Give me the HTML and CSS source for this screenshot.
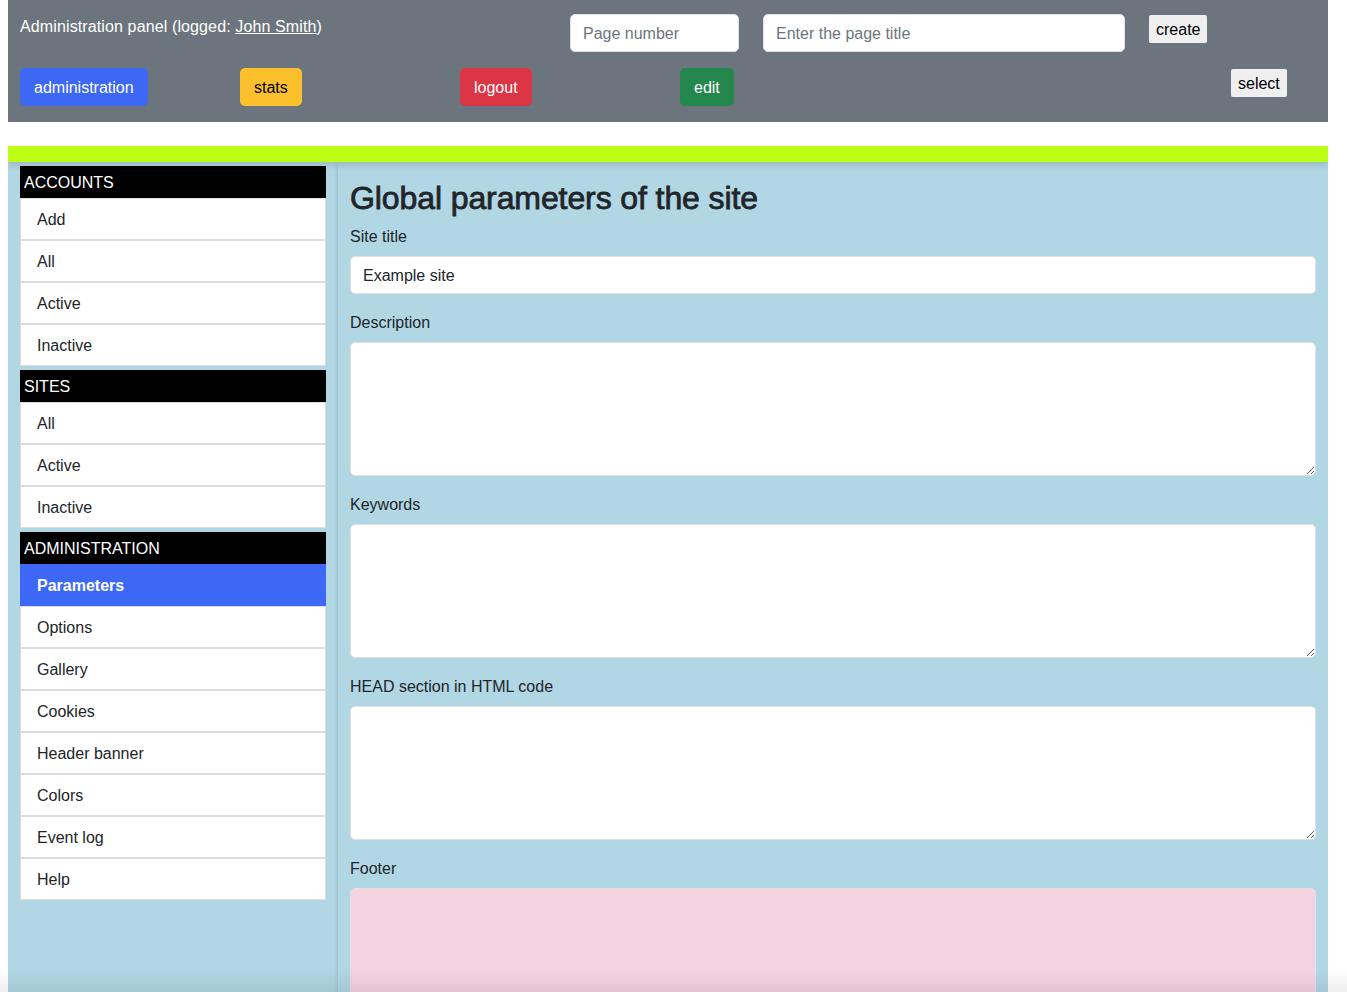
FILE: index.html
```html
<!DOCTYPE html>
<html lang="en">
<head>
<meta charset="utf-8">
<title>Administration panel</title>
<link rel="stylesheet" href="styles.css">
</head>
<body>
<header class="topbar">
  <div class="row-one">
    <div class="logged">Administration panel (logged: <a href="#">John Smith</a>)</div>
    <div class="field-cell"><input class="ctl" type="text" placeholder="Page number"></div>
    <div class="field-cell"><input class="ctl" type="text" placeholder="Enter the page title"></div>
    <div><button class="plain-btn">create</button></div>
  </div>
  <div class="row-two">
    <div><button class="btn btn-blue">administration</button></div>
    <div><button class="btn btn-yellow">stats</button></div>
    <div><button class="btn btn-red">logout</button></div>
    <div><button class="btn btn-green">edit</button></div>
    <div></div>
    <div><button class="plain-btn">select</button></div>
  </div>
</header>

<div class="lime-bar"></div>

<main class="main">
  <aside class="sidebar">
    <div class="group">
      <div class="group-head">ACCOUNTS</div>
      <a class="item" href="#">Add</a>
      <a class="item" href="#">All</a>
      <a class="item" href="#">Active</a>
      <a class="item" href="#">Inactive</a>
    </div>
    <div class="group">
      <div class="group-head">SITES</div>
      <a class="item" href="#">All</a>
      <a class="item" href="#">Active</a>
      <a class="item" href="#">Inactive</a>
    </div>
    <div class="group">
      <div class="group-head">ADMINISTRATION</div>
      <a class="item active" href="#">Parameters</a>
      <a class="item" href="#">Options</a>
      <a class="item" href="#">Gallery</a>
      <a class="item" href="#">Cookies</a>
      <a class="item" href="#">Header banner</a>
      <a class="item" href="#">Colors</a>
      <a class="item" href="#">Event log</a>
      <a class="item" href="#">Help</a>
    </div>
  </aside>

  <section class="content">
    <h2 class="title">Global parameters of the site</h2>
    <label class="lbl">Site title</label>
    <input class="ctl wide" type="text" value="Example site">
    <label class="lbl">Description</label>
    <textarea class="ctl area"></textarea>
    <label class="lbl">Keywords</label>
    <textarea class="ctl area"></textarea>
    <label class="lbl">HEAD section in HTML code</label>
    <textarea class="ctl area"></textarea>
    <label class="lbl">Footer</label>
    <textarea class="ctl area pink"></textarea>
  </section>
</main>

<div class="bottom-shade"></div>
</body>
</html>
```
FILE: styles.css
```css
* { box-sizing: border-box; }

html, body {
  margin: 0;
  padding: 0;
}

body {
  margin: 0 8px;
  font-family: "Liberation Sans", Arial, sans-serif;
  font-size: 16px;
  line-height: 24px;
  color: #212529;
  background: #fff;
  width: 1320px;
}

/* ---------- top bar ---------- */
.topbar {
  background: #6c757d;
  padding: 14px 12px 16px;
  display: flex;
  flex-direction: column;
  gap: 16px;
}

.row-one {
  display: grid;
  grid-template-columns: 550px 193px 386px auto;
  height: 38px;
}

.logged {
  color: #fff;
  line-height: 24px;
  padding-top: 1px;
  letter-spacing: 0.12px;
}

.logged a {
  color: #fff;
  text-decoration: underline;
}

.field-cell {
  padding-right: 24px;
}

.ctl {
  display: block;
  width: 100%;
  height: 38px;
  padding: 7px 12px 5px;
  font-family: inherit;
  font-size: 16px;
  line-height: 24px;
  color: #212529;
  background: #fff;
  border: 1px solid #dee2e6;
  border-radius: 5px;
  outline: none;
}

.ctl::placeholder {
  color: #6c757d;
}

.plain-btn {
  margin-top: 1px;
  height: 28px;
  padding: 1px 7px 0;
  font-family: inherit;
  font-size: 16px;
  line-height: 27px;
  color: #000;
  background: #efefef;
  border: none;
  border-radius: 2px;
}

.row-two {
  display: grid;
  grid-template-columns: 220px 220px 220px 220px 331px auto;
  height: 38px;
}

.btn {
  height: 38px;
  padding: 7px 13px 5px;
  font-family: inherit;
  font-size: 16px;
  line-height: 24px;
  border: 1px solid transparent;
  border-radius: 5px;
}

.btn-blue { background: #3d68f5; color: #fff; }
.btn-yellow { background: #fbc02c; color: #000; }
.btn-red { background: #dc3545; color: #fff; }
.btn-green { background: #24874e; color: #fff; }

/* ---------- lime bar ---------- */
.lime-bar {
  margin-top: 24px;
  height: 16px;
  background: #bdff14;
  position: relative;
  z-index: 2;
  box-shadow: 0 4px 6px rgba(0, 0, 0, 0.12);
}

/* ---------- main ---------- */
.main {
  display: grid;
  grid-template-columns: 330px 990px;
  background: #b1d6e4;
  box-shadow: 0 0 14px rgba(0, 0, 0, 0.10);
  position: relative;
  z-index: 1;
}

.sidebar {
  padding: 4px 12px 0;
  display: flex;
  flex-direction: column;
  gap: 4px;
}

.group {
  display: flex;
  flex-direction: column;
}

.group-head {
  background: #000;
  color: #fff;
  padding: 5px 4px 3px;
  line-height: 24px;
}

.item {
  display: block;
  height: 42px;
  padding: 9px 16px 7px;
  line-height: 24px;
  color: #212529;
  text-decoration: none;
  background: #fff;
  border: 1px solid #dcdcdc;
}

.item.active {
  background: #3d68f5;
  border-color: #3d68f5;
  color: #fff;
  font-weight: bold;
}

.content {
  padding: 16px 12px;
  box-shadow: -3px 0 4px -2px rgba(0, 0, 0, 0.12);
}

.title {
  margin: 0 0 8px;
  padding-top: 1px;
  height: 38px;
  font-size: 32px;
  line-height: 38px;
  font-weight: 400;
  letter-spacing: -0.1px;
  -webkit-text-stroke: 0.8px #212529;
  color: #212529;
}

.lbl {
  display: block;
  height: 24px;
  margin-bottom: 8px;
  padding-top: 1px;
  line-height: 24px;
}

.wide {
  margin-bottom: 16px;
}

.area {
  height: 134px;
  margin-bottom: 16px;
  resize: vertical;
}

.pink {
  background: #f6d3e0;
}

.bottom-shade {
  position: fixed;
  left: 0;
  right: 0;
  bottom: 0;
  height: 22px;
  background: linear-gradient(to bottom, rgba(0, 0, 0, 0), rgba(0, 0, 0, 0.07));
  pointer-events: none;
  z-index: 5;
}
```
